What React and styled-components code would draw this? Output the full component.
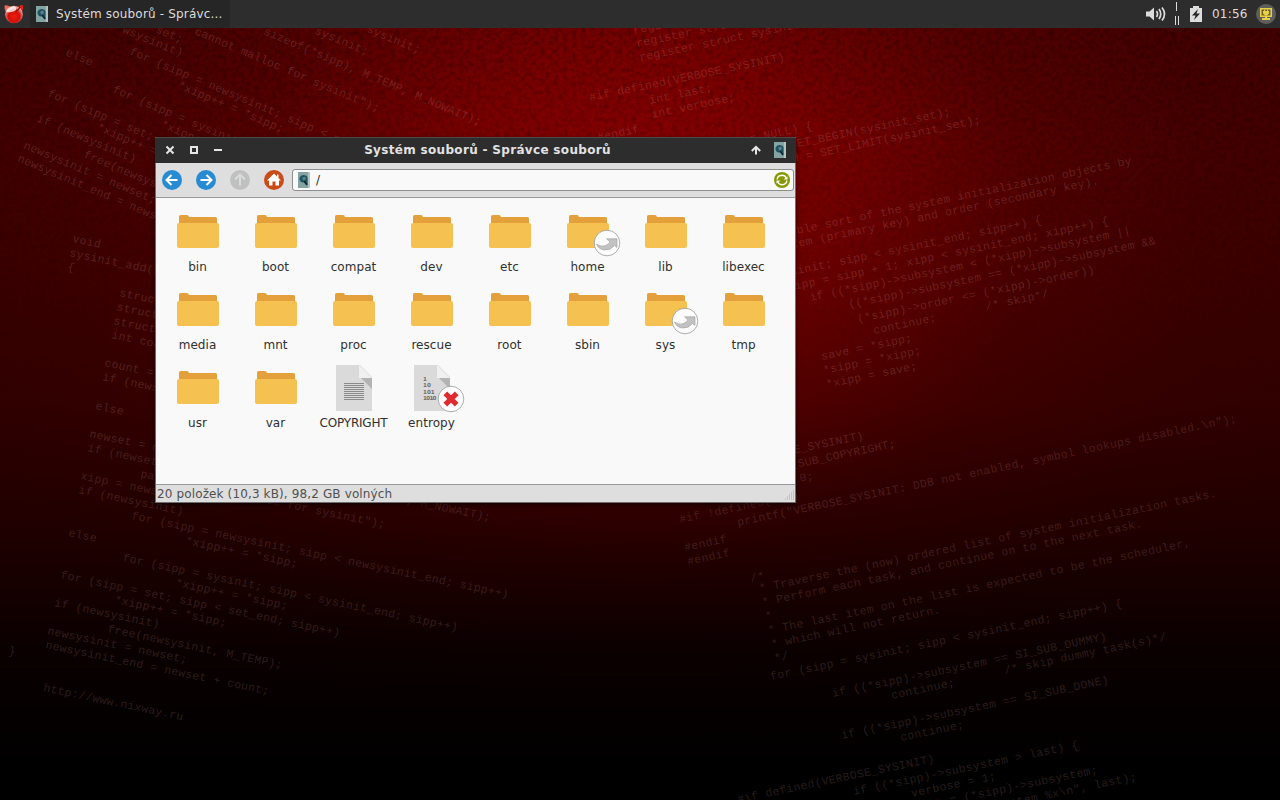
import styled, { createGlobalStyle, css } from 'styled-components';

const GlobalStyle = createGlobalStyle`
  * {
    box-sizing: border-box;
  }

  body {
    margin: 0;
    overflow: hidden;
    background: black;
    font-family: 'DejaVu Sans', sans-serif;
    font-size: 12px;
  }
`;

const Desktop = styled.main`
  position: relative;
  width: 1280px;
  height: 800px;
  overflow: hidden;
  background:
    linear-gradient(
      180deg,
      rgba(0, 0, 0, 0) 18%,
      rgba(0, 0, 0, 0.28) 50%,
      rgba(0, 0, 0, 0.52) 66%,
      rgba(0, 0, 0, 0.86) 82%,
      #000 97%
    ),
    radial-gradient(
      ellipse 700px 600px at 640px 220px,
      #8e0000 0%,
      #7a0000 28%,
      #540000 56%,
      #460000 80%,
      #420000 100%
    );
`;

const Wallpaper = styled.svg`
  position: absolute;
  inset: 0;
`;

const Code = styled.text`
  font-family: 'Liberation Mono', monospace;
  font-size: 11.5px;
  fill: #e8b0a8;
  fill-opacity: ${({ $dim }) => ($dim ? 0.17 : 0.19)};
  white-space: pre;
`;

const Panel = styled.header`
  position: relative;
  display: flex;
  align-items: center;
  height: 28px;
  padding: 0 4px;
  background: #2d2d2d;
  color: #dcdcdc;
`;

const TaskButton = styled.div`
  display: flex;
  align-items: center;
  gap: 8px;
  width: 200px;
  height: 28px;
  margin-left: 6px;
  padding-left: 6px;
  background: #262626;
  letter-spacing: 0.18px;
  white-space: nowrap;
`;

const Tray = styled.div`
  display: flex;
  align-items: center;
  height: 28px;
  margin-left: auto;
`;

const Clock = styled.time`
  width: 37px;
  margin: 0 7px 0 6px;
  letter-spacing: 0.2px;
  white-space: nowrap;
`;

const Window = styled.section`
  position: absolute;
  left: 155px;
  top: 137px;
  display: flex;
  flex-direction: column;
  width: 641px;
  height: 366px;
  border: 1px solid #6c6e70;
  border-top-color: #4b4a48;
  background: #dedede;
  box-shadow: 0 2px 5px rgba(0, 0, 0, 0.5);
`;

const TitleBar = styled.div`
  display: grid;
  grid-template-columns: 80px 1fr 80px;
  align-items: center;
  height: 25px;
  margin: 0 -1px;
  padding-bottom: 2px;
  background: #2d2d2d;
  color: #e2e2e2;
`;

const Title = styled.h1`
  margin: 0;
  padding-left: 24px;
  font-size: 12px;
  font-weight: bold;
  text-align: center;
  letter-spacing: 0.32px;
  white-space: nowrap;
`;

const TitleButtons = styled.div`
  display: flex;
  align-items: center;
  gap: 12px;
  ${({ $right }) =>
    $right
      ? css`
          justify-content: flex-end;
          padding-right: 10px;
        `
      : css`
          padding-left: 9px;
        `}
`;

const Toolbar = styled.div`
  display: flex;
  align-items: center;
  height: 34px;
  padding: 0 1px 0 6px;
`;

const NavIcon = styled.svg`
  flex: none;
  width: 20px;
  height: 20px;
  margin-right: 14px;
`;

const PathBar = styled.div`
  display: flex;
  align-items: center;
  flex: 1;
  height: 22px;
  margin-left: -6px;
  padding: 0 3px 0 5px;
  border: 1px solid #8e8f90;
  border-radius: 3px;
  background: #f9f9f9;
  color: #303030;
`;

const PathText = styled.span`
  flex: 1;
  margin-left: 6px;
`;

const Files = styled.div`
  display: grid;
  grid-template-columns: repeat(8, 78px);
  grid-auto-rows: 78px;
  align-content: start;
  height: 288px;
  padding: 10px 0 0 3px;
  border-top: 1px solid #98999a;
  border-bottom: 1px solid #98999a;
  background: #f9f9f9;
`;

const File = styled.div`
  display: flex;
  flex-direction: column;
  align-items: center;
  gap: 4px;
  color: #303030;
  line-height: 14px;
  white-space: nowrap;
`;

const FileName = styled.span`
  padding-right: 1px;
  letter-spacing: ${({ $tight }) => ($tight ? '-0.2px' : '0.05px')};
`;

const FileIcon = styled.svg`
  width: 48px;
  height: 48px;
  overflow: visible;
`;

const StatusBar = styled.footer`
  display: flex;
  justify-content: space-between;
  align-items: flex-end;
  flex: 1;
  padding-left: 1px;
  color: #505050;
  line-height: 16px;
  letter-spacing: 0.13px;
`;

// [x, y, text, x position is the end of the line]
const blocks = [
  {
    angle: 23,
    pitch: 7.12,
    lines: [
      [155, 32, 'set;'],
      [122, 32, 'wsysinit)'],
      [194, 34, 'cannot malloc for sysinit");'],
      [263, 34, 'sizeof(*sipp), M_TEMP, M_NOWAIT);'],
      [288, 22, '* - sysinit;'],
      [353, 26, '= sysinit;'],
      [65, 55, 'else'],
      [129, 54, 'for (sipp = newsysinit; sipp < newsy'],
      [177, 88, '*xipp++ = *sipp;'],
      [112, 92, 'for (sipp = sysinit; sipp'],
      [160, 127, '*xipp++ ='],
      [47, 96, 'for (sipp = set; sipp < s'],
      [96, 130, '*xipp++ = *sipp;'],
      [36, 121, 'if (newsysinit)'],
      [83, 157, 'free(newsysinit, M'],
      [23, 148, 'newsysinit = newset; x'],
      [17, 161, 'newsysinit_end = newset'],
    ],
  },
  {
    angle: 11.8,
    pitch: 7.13,
    lines: [
      [72, 242, 'void'],
      [69, 256, 'sysinit_add(struct s'],
      [67, 270, '{'],
      [119, 296, 'struct s'],
      [116, 310, 'struct s'],
      [113, 324, 'struct s'],
      [111, 338, 'int count'],
      [104, 366, 'count = x'],
      [102, 380, 'if (newset'],
      [95, 409, 'else'],
      [89, 437, 'newset = malloc('],
      [87, 451, 'if (newset == N'],
      [140, 477, 'panic("cannot malloc for sysinit");'],
      [80, 479, 'xipp = newset; x'],
      [78, 493, 'if (newsysinit)'],
      [385, 499, 'EMP, M_NOWAIT);'],
      [131, 519, 'for (sipp = newsysinit; sipp < newsysinit_end; sipp++)'],
      [185, 544, '*xipp++ = *sipp;'],
      [68, 536, 'else'],
      [122, 561, 'for (sipp = sysinit; sipp < sysinit_end; sipp++)'],
      [175, 586, '*xipp++ = *sipp;'],
      [60, 578, 'for (sipp = set; sipp < set_end; sipp++)'],
      [114, 603, '*xipp++ = *sipp;'],
      [54, 606, 'if (newsysinit)'],
      [107, 632, 'free(newsysinit, M_TEMP);'],
      [47, 634, 'newsysinit = newset;'],
      [45, 648, 'newsysinit_end = newset + count;'],
      [8, 654, '}'],
      [43, 691, 'http://www.nixway.ru'],
    ],
  },
  {
    angle: -11.8,
    pitch: 7.12,
    lines: [
      [634, 34, 'register struct'],
      [637, 47, 'register struct sysinit *sipp;'],
      [640, 61, 'register struct sysinit **x'],
      [590, 101, '#if defined(VERBOSE_SYSINIT)'],
      [650, 104, 'int last;'],
      [652, 118, 'int verbose;'],
      [598, 141, '#endif'],
      [813, 129, 'if (sysinit == NULL) {', true],
      [951, 115, 'sysinit = SET_BEGIN(sysinit_set);', true],
      [981, 123, 'sysinit_end = SET_LIMIT(sysinit_set);', true],
      [1132, 164, 'Perform a bubble sort of the system initialization objects by', true],
      [1099, 184, 'their subsystem (primary key) and order (secondary key).', true],
      [1042, 223, 'for (sipp = sysinit; sipp < sysinit_end; sipp++) {', true],
      [1109, 224, 'for (xipp = sipp + 1; xipp < sysinit_end; xipp++) {', true],
      [1131, 234, 'if ((*sipp)->subsystem < (*xipp)->subsystem ||', true],
      [1156, 244, '((*sipp)->subsystem == (*xipp)->subsystem &&', true],
      [1095, 273, '(*sipp)->order <= (*xipp)->order))', true],
      [1049, 297, '/* skip*/', true],
      [874, 334, 'continue;'],
      [822, 360, 'save = *sipp;'],
      [824, 374, '*sipp = *xipp;'],
      [827, 388, '*xipp = save;'],
      [864, 439, '(VERBOSE_SYSINIT)', true],
      [896, 447, 'last = SI_SUB_COPYRIGHT;', true],
      [814, 479, 'verbose = 0;', true],
    ],
  },
  {
    angle: -11.8,
    pitch: 7.18,
    lines: [
      [680, 523, '#if !defined(DDB)'],
      [738, 526, 'printf("VERBOSE_SYSINIT: DDB not enabled, symbol lookups disabled.\\n");'],
      [685, 551, '#endif'],
      [688, 565, '#endif'],
      [751, 582, '/*'],
      [760, 592, '* Traverse the (now) ordered list of system initialization tasks.'],
      [763, 606, '* Perform each task, and continue on to the next task.'],
      [766, 620, '*'],
      [769, 634, '* The last item on the list is expected to be the scheduler,'],
      [772, 648, '* which will not return.'],
      [775, 662, '*/'],
      [771, 680, 'for (sipp = sysinit; sipp < sysinit_end; sipp++) {'],
      [833, 697, 'if ((*sipp)->subsystem == SI_SUB_DUMMY)'],
      [892, 699, 'continue;'],
      [1005, 674, '/* skip dummy task(s)*/'],
      [842, 739, 'if ((*sipp)->subsystem == SI_SUB_DONE)'],
      [901, 741, 'continue;'],
      [738, 803, '#if defined(VERBOSE_SYSINIT)'],
      [854, 795, 'if ((*sipp)->subsystem > last) {'],
      [912, 797, 'verbose = 1;'],
      [1098, 773, 'last = (*sipp)->subsystem;', true],
      [1137, 780, 'printf("subsystem %x\\n", last);', true],
    ],
  },
];

const files = [
  { name: 'bin' },
  { name: 'boot' },
  { name: 'compat' },
  { name: 'dev' },
  { name: 'etc' },
  { name: 'home', emblem: 'link' },
  { name: 'lib' },
  { name: 'libexec' },
  { name: 'media' },
  { name: 'mnt' },
  { name: 'proc' },
  { name: 'rescue' },
  { name: 'root' },
  { name: 'sbin' },
  { name: 'sys', emblem: 'link' },
  { name: 'tmp' },
  { name: 'usr' },
  { name: 'var' },
  { name: 'COPYRIGHT', type: 'text' },
  { name: 'entropy', type: 'binary', emblem: 'denied' },
];

function CodeWallpaper() {
  return (
    <Wallpaper width="1280" height="800">
      <filter id="grain">
        <feTurbulence type="fractalNoise" baseFrequency="0.22" numOctaves="3" seed="4" />
        <feColorMatrix values="0 0 0 0 0  0 0 0 0 0  0 0 0 0 0  0.7 0 0 0 -0.26" />
      </filter>
      <linearGradient id="fade" x1="0" y1="0" x2="0" y2="1">
        <stop offset="0" stopColor="#fff" />
        <stop offset="0.5" stopColor="#fff" stopOpacity="0" />
      </linearGradient>
      <mask id="top">
        <rect width="1280" height="800" fill="url(#fade)" />
      </mask>
      <g mask="url(#top)">
        <rect width="1280" height="800" filter="url(#grain)" />
      </g>
      {blocks.map(({ angle, pitch, lines }) =>
        lines.map(([x, y, text, end]) => (
          <Code
            key={`${x}-${y}`}
            x={x}
            y={y}
            $dim={y > 450}
            textAnchor={end ? 'end' : 'start'}
            textLength={text.length * pitch}
            transform={`rotate(${angle} ${x} ${y})`}
          >
            {text}
          </Code>
        ))
      )}
    </Wallpaper>
  );
}

function CabinetIcon() {
  return (
    <svg width="12" height="16" viewBox="0 0 12 16">
      <path d="M0 0h12v16H0z" fill="#84a3a3" />
      <path d="M10 0h2v16h-2z" fill="#b4c2c0" />
      <path d="M1.500 6Q2.500 3 6 3Q9.500 3.500 9.500 6V13L8 11.500L7 10L5 10.500Q2 10 1.500 7.500z" fill="#1f5260" />
      <path d="M4 6l3-1.500 1 2-2 2.500z" fill="#5b8589" />
      <path d="M6 9l3 4" stroke="#0b2630" strokeWidth="1.500" />
    </svg>
  );
}

function FreeBsdLogo() {
  return (
    <svg width="20" height="20" viewBox="0 0 20 20">
      <defs>
        <radialGradient id="bsd" cx="0.5" cy="0.62" r="0.55">
          <stop offset="0" stopColor="#ee1c0c" />
          <stop offset="0.6" stopColor="#cf1208" />
          <stop offset="1" stopColor="#f0a69c" />
        </radialGradient>
      </defs>
      <path d="M0.500 1.500Q0 5 2 8L7 3Q3 0.500 0.500 1.500z" fill="#e8685c" />
      <path d="M19 1Q20 4.500 17.500 8L13 3.500Q16 0.500 19 1z" fill="#dc2015" />
      <circle cx="10" cy="10.500" r="8.800" fill="url(#bsd)" />
      <path d="M2 8Q4 2.500 10 2.500Q13 3 12 5.500Q10 9 2 8z" fill="#fff" fillOpacity="0.75" />
      <path d="M12 7Q15 6 16 3" stroke="#8d0803" strokeWidth="1.200" fill="none" />
    </svg>
  );
}

function NavButton({ color, children }) {
  return (
    <NavIcon viewBox="0 0 20 20">
      <circle cx="10" cy="10" r="10" fill={color} />
      {children}
    </NavIcon>
  );
}

function Arrow({ rotate = 0, color = '#fff' }) {
  return (
    <path
      d="M4.500 10H15.500M9.500 5L4.500 10L9.500 15"
      fill="none"
      stroke={color}
      strokeWidth="2"
      transform={`rotate(${rotate} 10 10)`}
    />
  );
}

function FolderShape() {
  return (
    <>
      <path d="M5 20V8.500Q5 7 6.500 7H13Q14.500 7 15 9H41.500Q43 9 43 10.500V20z" fill="#e4a13b" />
      <rect x="3" y="15" width="42" height="25" rx="2" fill="#f5c251" />
    </>
  );
}

function DocumentShape({ type }) {
  return (
    <>
      <path d="M6 1H30L42 13V47H6z" fill="#dadada" />
      <path d="M29 1L42 14H29z" fill="#f0f0f0" />
      <path d="M31 14H42V25z" fill="#b3b3b3" />
      {type === 'text' ? (
        <path
          d="M14 19.500h20m-20 2h20m-20 2h20m-20 2h20m-20 2h20m-20 2h20m-20 2h20m-20 2h20m-20 2h20"
          stroke="#8a8a8a"
        />
      ) : (
        <g fontFamily="'DejaVu Sans', sans-serif" fontSize="5.600" fontWeight="bold" fill="#6e6e6e">
          <text x="15" y="17">1</text>
          <text x="15" y="23">10</text>
          <text x="15" y="30">101</text>
          <text x="15" y="36" textLength="13.500">1010</text>
        </g>
      )}
    </>
  );
}

function Emblem({ kind }) {
  return (
    <>
      <circle cx="43" cy="35" r="12.800" fill="#fdfdfd" stroke="#9a9a9a" strokeWidth="0.800" />
      {kind === 'link' ? (
        <path
          d="M32.500 36Q36.500 39 41 37.800Q44.500 36.500 46 34L42.500 30.800H53V39.500L50.500 37.500Q46.500 42.500 40.500 42Q34.500 41.500 32.500 36z"
          fill="#c2c2c2"
          stroke="#a0a0a0"
          strokeWidth="0.600"
        />
      ) : (
        <path d="M37.300 29.300L48.700 40.700M48.700 29.300L37.300 40.700" stroke="#df2b2f" strokeWidth="5.200" />
      )}
    </>
  );
}

export default function App() {
  return (
    <>
      <GlobalStyle />
      <Desktop>
        <CodeWallpaper />

        <Panel>
          <FreeBsdLogo />
          <TaskButton>
            <CabinetIcon />
            Systém souborů - Správc...
          </TaskButton>
          <Tray>
            <svg width="22" height="16" viewBox="0 0 22 16">
              <path d="M1 5.500H4.500L9 1.500V14.500L4.500 10.500H1z" fill="#dcdcdc" />
              <path
                d="M11.500 5Q13.500 8 11.500 11M14 3Q17.500 8 14 13M17 1.500Q22 8 17 14.500"
                fill="none"
                stroke="#dcdcdc"
                strokeWidth="1.700"
              />
            </svg>
            <svg width="19" height="28" viewBox="0 0 19 28">
              <path d="M9.500 2V11M8.500 16V25M11.500 16V25" stroke="#dcdcdc" />
            </svg>
            <svg width="20" height="16" viewBox="0 0 20 16">
              <path d="M7 2V0H13V2H16V16H4V2z" fill="#dcdcdc" />
              <path d="M12 3L6 9.500H9.500L8 14L14 7.500H10.500z" fill="#262626" />
            </svg>
            <Clock>01:56</Clock>
            <svg width="20" height="20" viewBox="0 0 20 20">
              <circle cx="10" cy="10" r="10" fill="#5e5e5a" />
              <path d="M4 4H16V13H11V14H14V16H6V14H9V13H4z" fill="#e8cf48" />
              <path d="M5.500 5.500H14.500V11.500H5.500z" fill="#6c6131" />
              <path d="M8 5.500H9V7H11V5.500H12V7H13V9.500L11 11.500H9L7 9.500V7H8z" fill="#e8cf48" />
            </svg>
          </Tray>
        </Panel>

        <Window>
          <TitleBar>
            <TitleButtons>
              <svg width="12" height="12" viewBox="0 0 12 12">
                <path d="M2.500 2.500L9.500 9.500M9.500 2.500L2.500 9.500" stroke="#e6e6e6" strokeWidth="2" />
              </svg>
              <svg width="12" height="12" viewBox="0 0 12 12">
                <path d="M3 3H9V9H3z" fill="none" stroke="#e6e6e6" strokeWidth="2" />
              </svg>
              <svg width="12" height="12" viewBox="0 0 12 12">
                <path d="M2 6H10" stroke="#e6e6e6" strokeWidth="2" />
              </svg>
            </TitleButtons>
            <Title>Systém souborů - Správce souborů</Title>
            <TitleButtons $right>
              <svg width="12" height="12" viewBox="0 0 12 12">
                <path d="M6 2.500V10.500M1.800 7L6 2.800L10.200 7" fill="none" stroke="#e6e6e6" strokeWidth="2" />
              </svg>
              <CabinetIcon />
            </TitleButtons>
          </TitleBar>

          <Toolbar>
            <NavButton color="#268bd2">
              <Arrow />
            </NavButton>
            <NavButton color="#268bd2">
              <Arrow rotate={180} />
            </NavButton>
            <NavButton color="#bfc1c1">
              <Arrow rotate={90} color="#dadada" />
            </NavButton>
            <NavButton color="#cb4b16">
              <path d="M10 3.500L3 10.500H5V15.500H8.500V11.500H11.500V15.500H15V10.500H17L14.500 8V4.500H13V6.500z" fill="#fff" />
            </NavButton>
            <PathBar>
              <CabinetIcon />
              <PathText>/</PathText>
              <svg width="16" height="16" viewBox="0 0 16 16">
                <circle cx="8" cy="8" r="8" fill="#859900" />
                <path
                  d="M3.200 7.500Q3.500 3.500 8 3.300Q11 3.400 12.300 6M12.800 8.500Q12.500 12.500 8 12.700Q5 12.600 3.700 10"
                  fill="none"
                  stroke="#fff"
                  strokeWidth="1.500"
                />
                <path d="M13.500 4.500V7.500H9.500zM2.500 11.500V8.500H6.500z" fill="#fff" />
              </svg>
            </PathBar>
          </Toolbar>

          <Files>
            {files.map(({ name, type, emblem }) => (
              <File key={name}>
                <FileIcon viewBox="0 0 48 48">
                  {type ? <DocumentShape type={type} /> : <FolderShape />}
                  {emblem && <Emblem kind={emblem} />}
                </FileIcon>
                <FileName $tight={name === 'COPYRIGHT'}>{name}</FileName>
              </File>
            ))}
          </Files>

          <StatusBar>
            20 položek (10,3 kB), 98,2 GB volných
            <svg width="12" height="12" viewBox="0 0 12 12">
              <path
                d="M10 1h1M8 3h1M10 3h1M6 5h1M8 5h1M10 5h1M4 7h1M6 7h1M8 7h1M10 7h1M2 9h1M4 9h1M6 9h1M8 9h1M10 9h1"
                stroke="#a8a8a8"
              />
            </svg>
          </StatusBar>
        </Window>
      </Desktop>
    </>
  );
}
